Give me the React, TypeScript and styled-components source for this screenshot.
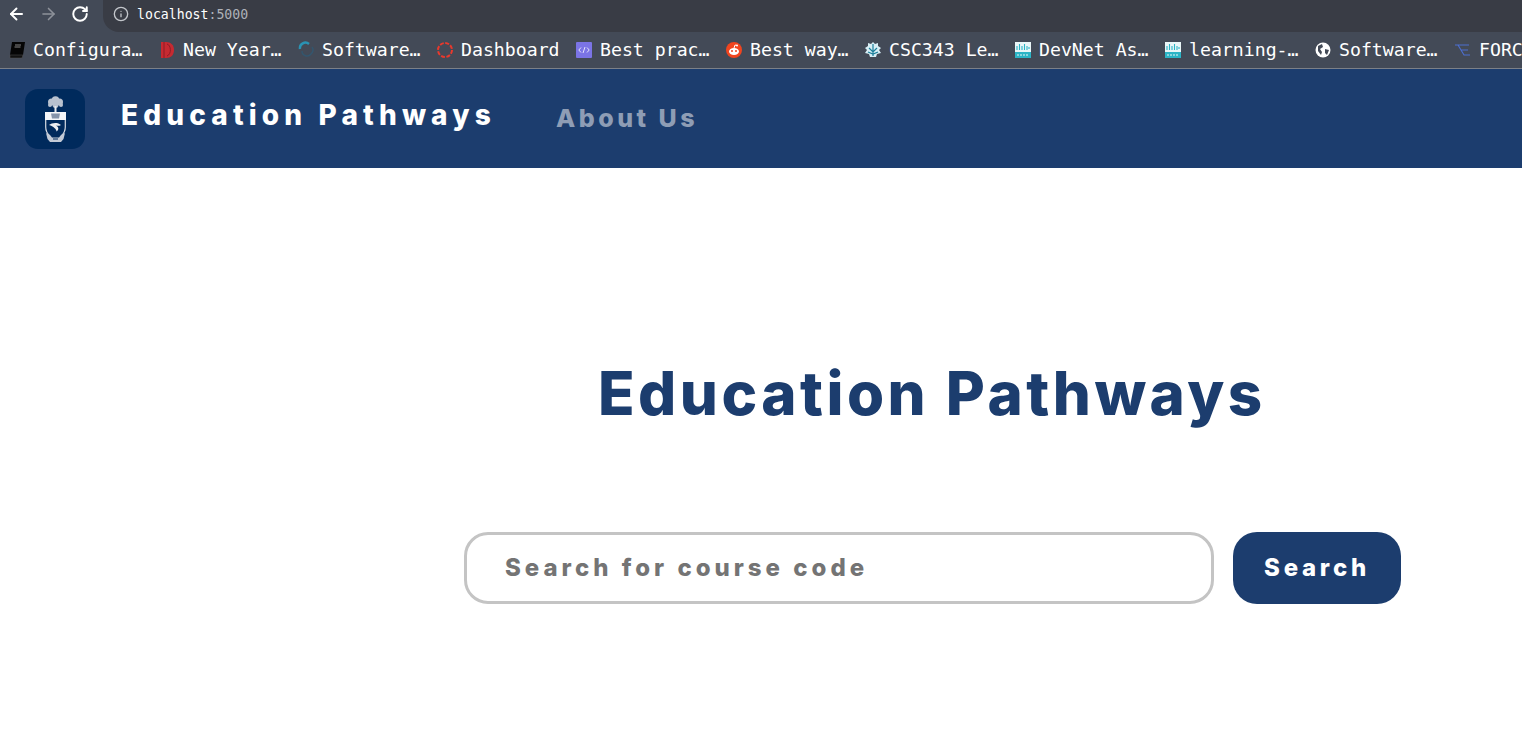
import React from "react";
import styled, { createGlobalStyle } from "styled-components";
import { ArrowLeft, ArrowRight, RotateCw, Info } from "lucide-react";

const Global = createGlobalStyle`
  html, body { margin: 0; padding: 0; background: #fff; overflow: hidden; }
  * { box-sizing: border-box; }
`;
const Page = styled.div`width: 1522px; height: 741px; display: flex; flex-direction: column; overflow: hidden;`;
const TopBar = styled.div`height: 32px; background: #434a57; display: flex; align-items: flex-start;`;
const NavButtons = styled.div`width: 103px; height: 28px; padding-left: 7px; display: flex; gap: 13px; align-items: center;`;
const NavIcon = styled.span<{ $dim?: boolean }>`display: flex; width: 19px; color: ${p => (p.$dim ? "#8e929a" : "#fff")};`;
const UrlPill = styled.div`
  flex: 1; height: 32px; background: #393c45; border-radius: 0 0 0 16px;
  display: flex; align-items: center; gap: 8px; padding: 0 0 4px 10px;
  font: 13.2px "DejaVu Sans Mono", monospace; color: #fff;
`;
const UrlPort = styled.span`color: #aeb2b9;`;
const Bookmarks = styled.div`
  height: 37px; background: #434a57; border-bottom: 1px solid #7c8087;
  display: flex; align-items: center; padding: 0 0 1px 8px; overflow: hidden;
`;
const Bookmark = styled.div<{ $w: number }>`
  flex: 0 0 ${p => p.$w}px; display: flex; align-items: center; gap: 7px; white-space: nowrap;
  font: 18.2px "DejaVu Sans Mono", monospace; color: #fff; letter-spacing: 0;
`;
const Fav = styled.svg`flex: 0 0 18px; width: 18px; height: 18px;`;
const Navbar = styled.header`height: 99px; background: #1c3d6e; display: flex; align-items: center; padding-left: 25px;`;
const Logo = styled.div`
  width: 60px; height: 60px; background: #002a5c; border-radius: 13px;
  display: flex; align-items: center; justify-content: center;
`;
const Brand = styled.div`
  margin: -7px 0 0 36px; width: 435px; font: 800 28px Inter, sans-serif; letter-spacing: 5.15px; color: #fff;
`;
const NavLink = styled.div`margin-top: -2px; font: 800 25px Inter, sans-serif; letter-spacing: 3.5px; color: #8e9db5;`;
const Main = styled.main`flex: 1; display: flex; flex-direction: column; padding-left: 464px;`;
const Title = styled.h1`
  margin: 187px 0 0 134px; height: 78px; font: 800 60px/76px Inter, sans-serif;
  letter-spacing: 3.5px; color: #1c3d6e; white-space: nowrap;
`;
const SearchRow = styled.div`display: flex; gap: 19px; margin-top: 99px;`;
const SearchInput = styled.div`
  width: 750px; height: 72px; border: 3px solid #c4c4c4; border-radius: 24px; background: #fff;
  display: flex; align-items: center; padding: 0 0 2px 38px;
  font: 800 24px Inter, sans-serif; letter-spacing: 4px; color: #747474;
`;
const SearchButton = styled.button`
  width: 168px; height: 72px; border: 0; border-radius: 24px; background: #1c3d6e; color: #fff;
  font: 800 24px Inter, sans-serif; letter-spacing: 3.7px; padding: 0 0 2px;
`;

const Crest = () => (
  <svg width="21" height="46" viewBox="0 0 21 46">
    <g fill="#b9c2cf">
      <circle cx="10.500" cy="4" r="3.800" /><circle cx="6.500" cy="6" r="3.500" /><circle cx="14.500" cy="6" r="3.500" />
      <circle cx="10.500" cy="9" r="3" /><circle cx="5" cy="9" r="2" /><circle cx="16" cy="9" r="2" />
      <rect x="9.500" y="10" width="2" height="7" fill="#e6e9ee" />
    </g>
    <path d="M0 16h21v8H0z" fill="#f5f6f8" />
    <path d="M6 17.500h9l-1 5H7z" fill="#8694aa" />
    <path d="M.700 24v7c0 5 3 8 4 9M20.300 24v7c0 5-3 8-4 9" fill="none" stroke="#d6dbe3" strokeWidth="1.200" />
    <path d="M4 29c3-2.500 9-3 12 0-1.500 1-3.500 1-5 .5 3 1.500 3 4.500.5 6 0-2.500-3-5-7.500-6.500z" fill="#eceef2" />
    <path d="M1 37l4 2 2 2.500h7l2-2.500 4-2-1.500 6-2.500 3H5l-2.500-3z" fill="#c2cad6" />
    <path d="M8 43h5" stroke="#002a5c" />
  </svg>
);

const Icons: Record<string, React.ReactNode> = {
  book: <Fav viewBox="0 0 18 18"><path d="M4 1h13l-2 13H2z" fill="#050505" /><path d="M2 14h13l-1 3H2z" fill="#111" stroke="#555" strokeWidth=".5" /><path d="M7 4h6M6.500 6h6" stroke="#888" /></Fav>,
  red: <Fav viewBox="0 0 18 18"><path d="M3 1h5c5 0 8 3 8 8s-3 8-8 8H3z" fill="#c62a31" /><path d="M6 1v16M9 3c4 1 5 10 0 12" fill="none" stroke="#8c1d26" /></Fav>,
  swirl: <Fav viewBox="0 0 18 18"><path d="M3 8a5.500 5.500 0 0 1 9-5" fill="none" stroke="#2a93b4" strokeWidth="2.400" /><path d="M5 10a5 5 0 0 0 9 3 5 5 0 0 0 1-7" fill="none" stroke="#33566e" strokeWidth="1.500" /></Fav>,
  dash: <Fav viewBox="0 0 18 18"><circle cx="9" cy="9" r="7" fill="none" stroke="#e8392d" strokeWidth="2" strokeDasharray="4 1.500" /></Fav>,
  code: <Fav viewBox="0 0 18 18"><rect x="1" y="1" width="16" height="16" rx="1" fill="#7b74e6" /><path d="M6 6.500L3.800 9 6 11.500M12 6.500L14.200 9 12 11.500M10 6l-2 6" fill="none" stroke="#e4e2fb" /></Fav>,
  reddit: <Fav viewBox="0 0 18 18"><circle cx="9" cy="9" r="8" fill="#f1451f" /><ellipse cx="9" cy="10.500" rx="5" ry="3.500" fill="#fff" /><circle cx="7" cy="10" r="1" fill="#f1451f" /><circle cx="11" cy="10" r="1" fill="#f1451f" /><circle cx="12" cy="4.500" r="1" fill="#fff" /><path d="M9 7l1-3 2 .5" fill="none" stroke="#fff" /></Fav>,
  leaf: <Fav viewBox="0 0 18 18"><path d="M9 1l2 2 3-1v3l3 2-2 2 2 3-4 1-1 3H6l-1-3-4-1 2-3-2-2 3-2V2l3 1z" fill="#d7eef5" /><path d="M9 3v12M5 7l4 4 4-4M4 11l5 2 5-2" fill="none" stroke="#1c7f9a" strokeWidth="1.200" /></Fav>,
  cisco: <Fav viewBox="0 0 18 18"><rect x="1" y="1" width="16" height="16" fill="#e9f6f8" /><path d="M3 5v4M5.500 3v6M8 5v4M10.500 3v6M13 5v4M15 6v2" stroke="#2bb4c6" strokeWidth="1.100" /><rect x="1" y="11" width="16" height="6" fill="#2bb4c6" /><path d="M3 14h12" stroke="#e9f6f8" strokeDasharray="2 1" /></Fav>,
  globe: <Fav viewBox="0 0 18 18"><circle cx="9" cy="9" r="7.500" fill="#fff" /><path d="M4 5l4-2 1 3-3 2 2 3-1 3-3-4zM11 8l4 1-2 5-2-2z" fill="#434a57" /></Fav>,
  force: <Fav viewBox="0 0 18 18"><path d="M1 4h14M4 4l3 5h7M7 9l3 5h6" fill="none" stroke="#4d6fd0" strokeWidth="1.100" /></Fav>,
};

const items: [string, string, number][] = [
  ["book", "Configura…", 150], ["red", "New Year…", 139], ["swirl", "Software…", 139], ["dash", "Dashboard", 139],
  ["code", "Best prac…", 150], ["reddit", "Best way…", 139], ["leaf", "CSC343 Le…", 150], ["cisco", "DevNet As…", 150],
  ["cisco", "learning-…", 150], ["globe", "Software…", 140], ["force", "FORCE", 100],
];

export default function App() {
  return (
    <Page>
      <Global />
      <TopBar>
        <NavButtons>
          <NavIcon><ArrowLeft size={20} strokeWidth={2.4} /></NavIcon>
          <NavIcon $dim><ArrowRight size={20} strokeWidth={2} /></NavIcon>
          <NavIcon><RotateCw size={18} strokeWidth={2.6} /></NavIcon>
        </NavButtons>
        <UrlPill>
          <Info size={16} color="#c3c6cb" />
          <span>localhost<UrlPort>:5000</UrlPort></span>
        </UrlPill>
      </TopBar>
      <Bookmarks>
        {items.map(([icon, label, w], i) => (
          <Bookmark key={i} $w={w}>{Icons[icon]}{label}</Bookmark>
        ))}
      </Bookmarks>
      <Navbar>
        <Logo><Crest /></Logo>
        <Brand>Education Pathways</Brand>
        <NavLink>About Us</NavLink>
      </Navbar>
      <Main>
        <Title>Education Pathways</Title>
        <SearchRow>
          <SearchInput>Search for course code</SearchInput>
          <SearchButton>Search</SearchButton>
        </SearchRow>
      </Main>
    </Page>
  );
}
